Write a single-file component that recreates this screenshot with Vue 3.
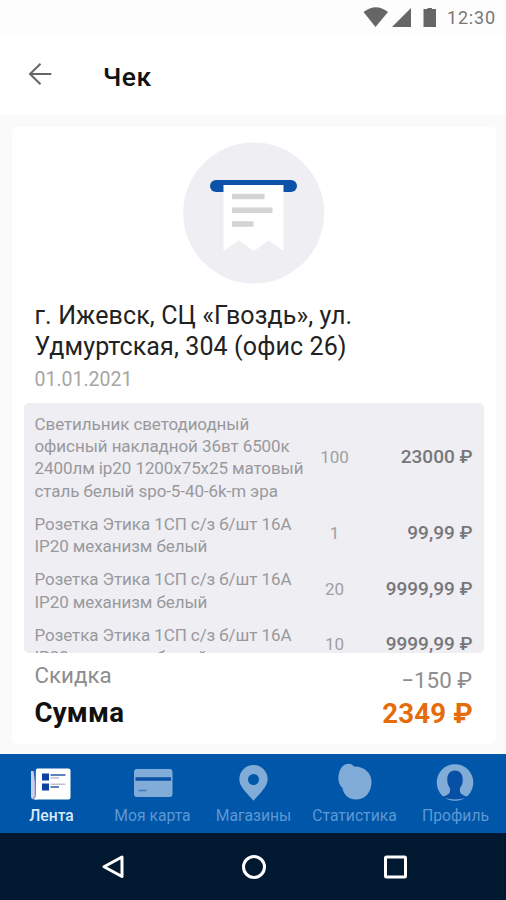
<script setup>
const rows = [
  { name: ['Светильник светодиодный', 'офисный накладной 36вт 6500к', '2400лм ip20 1200x75x25 матовый', 'сталь белый spo-5-40-6k-m эра'], qty: '100', price: '23000 ₽' },
  { name: ['Розетка Этика 1СП с/з б/шт 16А', 'IP20 механизм белый'], qty: '1', price: '99,99 ₽' },
  { name: ['Розетка Этика 1СП с/з б/шт 16А', 'IP20 механизм белый'], qty: '20', price: '9999,99 ₽' },
  { name: ['Розетка Этика 1СП с/з б/шт 16А', 'IP20 механизм белый'], qty: '10', price: '9999,99 ₽' },
]
</script>

<template>
  <div class="screen">
    <div class="status">
      <svg class="signals" width="78" height="24" viewBox="0 0 78 24" fill="#666">
        <path d="M1.500 8Q14 -1.500 26 8L13.500 23Z" />
        <path d="M49 4V23H30Z" />
        <path d="M65.500 5V4H70V5H74V23H61.500V5Z" />
      </svg>
      <span class="time">12:30</span>
    </div>
    <header class="head">
      <svg class="back" width="24" height="24" viewBox="0 0 24 24" fill="none" stroke="#666" stroke-width="2">
        <path d="M23.300 12H2M12.500 1.700L2 12L12.500 22.300" />
      </svg>
      <h1>Чек</h1>
    </header>
    <main class="body">
      <section class="card">
        <svg class="hero" width="142" height="142" viewBox="0 0 142 142">
          <circle cx="70.700" cy="71" r="70.500" fill="#eeeef3" />
          <rect x="27" y="38" width="87" height="12" rx="6" fill="#0c52a8" />
          <path d="M40.500 43H100.500V109L85.500 98.500L71 109L56 98.500L40.500 109Z" fill="#fff" />
          <path d="M49 54.500H81.500M49 68.300H89.500M49 82H70.500" stroke="#d4d4d4" stroke-width="5.500" />
        </svg>
        <h2>г. Ижевск, СЦ «Гвоздь», ул.<br />Удмуртская, 304 (офис 26)</h2>
        <p class="date">01.01.2021</p>
        <div class="list">
          <div v-for="(r, i) in rows" :key="i" class="row">
            <div class="name"><div v-for="l in r.name" :key="l">{{ l }}</div></div>
            <div class="qty">{{ r.qty }}</div>
            <div class="price">{{ r.price }}</div>
          </div>
        </div>
        <div class="discount"><span>Скидка</span><span class="minus">−150 ₽</span></div>
        <div class="total"><span>Сумма</span><span class="sum">2349 ₽</span></div>
      </section>
    </main>
    <nav class="tabs">
      <div class="tab active">
        <svg width="42" height="38" viewBox="1.5 0 42 38">
          <path d="M4 6.500H1.500V32Q1.500 35 5 35H8Z" fill="#c9cfea" transform="translate(0 -1.500)" />
          <path d="M6.500 4Q6.500 2.500 8 2.500H39Q41 2.500 41 4.500V31.500Q41 33.500 39 33.500H6Q3 33.500 6 30.500Z" fill="#fff" />
          <path d="M5.800 4.500V29.500Q5.800 32.500 3.500 32.500" fill="none" stroke="#5d73bd" />
          <path d="M12.500 7.500H19.500V14.500H12.500ZM12.500 17.500H19.500V24.500H12.500Z" fill="#0c43a1" />
          <path d="M21 9H36M21 21H29.500" stroke="#3159a8" stroke-width="1.700" />
          <path d="M21 12H29.500M21 18.300H36" stroke="#c3bfd1" stroke-width="1.500" />
        </svg>
        <span>Лента</span>
      </div>
      <div class="tab">
        <svg width="42" height="38" viewBox="0 0 42 38">
          <rect x="2" y="3" width="38.500" height="28" rx="3" fill="#80acd7" />
          <path d="M3.500 13H39" stroke="#0a51a6" stroke-width="3.600" />
          <path d="M6.500 24.500H14.500" stroke="#3979b9" stroke-width="1.500" />
        </svg>
        <span>Моя карта</span>
      </div>
      <div class="tab">
        <svg width="42" height="38" viewBox="0 0 42 38">
          <path fill="#80acd7" fill-rule="evenodd" d="M20.500-1A14.200 14.200 0 0 0 6.300 13.200C6.300 21 15 28 20.500 34.700C26 28 34.700 21 34.700 13.200A14.200 14.200 0 0 0 20.500-1ZM20.500 8A5.500 5.500 0 1 1 20.500 19A5.500 5.500 0 1 1 20.500 8Z" />
        </svg>
        <span>Магазины</span>
      </div>
      <div class="tab">
        <svg width="42" height="38" viewBox="0 0 42 38">
          <path fill="#80acd7" d="M7.500 1.500C10-2.300 17-4 20 .5C30 .2 37.500 7 37.500 15.500C37.500 26.500 31 33.500 22 33.500C15 33.500 9.500 29 8.500 22C3.500 18 3 8 7.500 1.500Z" />
        </svg>
        <span>Статистика</span>
      </div>
      <div class="tab">
        <svg width="42" height="38" viewBox="0 0 42 38">
          <circle cx="20" cy="16.500" r="18.300" fill="#80acd7" />
          <path fill="#0750a5" d="M20 4.500C14.500 4.500 12 9 12.300 14C12.300 18.500 14 20 15 22.500C16 28 12 29.500 7 31C14.500 34.300 25.500 34.300 33 31C28 29.500 24 28 25 22.500C26 20 27.700 18.500 27.700 14C28 9 25.500 4.500 20 4.500Z" />
        </svg>
        <span>Профиль</span>
      </div>
    </nav>
    <div class="system">
      <svg width="26" height="26" viewBox="0 0 26 26"><path d="M23 3V22.500L5 12.800Z" /></svg>
      <svg width="26" height="26" viewBox="0 0 26 26"><circle cx="13" cy="13" r="10.500" /></svg>
      <svg width="26" height="26" viewBox="0 0 26 26"><rect x="3.500" y="3" width="20" height="20" rx="1" /></svg>
    </div>
  </div>
</template>

<style>
body { margin: 0; }
</style>

<style scoped>
.screen { width: 506px; height: 900px; display: flex; flex-direction: column; background: #fafafa; font-family: Roboto, "Noto Sans", sans-serif; color: #111; overflow: hidden; }
.status { height: 36px; box-sizing: border-box; background: #fdfdfd; display: flex; justify-content: flex-end; align-items: flex-start; padding: 4px 10px 0 0; }
.signals { margin: 0 7px 0 0; }
.time { font-size: 18px; line-height: 28px; letter-spacing: 0.850px; color: #777; white-space: nowrap; }
.head { height: 78px; box-sizing: border-box; background: #fff; display: flex; align-items: center; padding: 0 0 2px 28px; }
h1 { margin: 6px 0 0 51px; font-size: 26.500px; line-height: 34px; font-weight: 500; letter-spacing: 0.500px; }
.body { padding: 13px 10px 10px 12px; flex: 1; box-sizing: border-box; }
.card { height: 617px; box-sizing: border-box; background: #fff; border-radius: 5px; padding: 15px 12px 0 11.500px; display: flex; flex-direction: column; }
.hero { align-self: center; flex: none; }
h2 { margin: 16px 0 0 11px; font-size: 25px; line-height: 31px; font-weight: 400; letter-spacing: 0.120px; white-space: nowrap; color: #222; }
.date { margin: 6px 0 0 11px; font-size: 19.500px; line-height: 24px; color: #a6a6a6; }
.list { flex: none; margin-top: 11px; height: 250px; box-sizing: border-box; overflow: hidden; background: #eeeef3; border-radius: 5px; padding: 9.500px 11.500px 0 11px; display: flex; flex-direction: column; gap: 10.600px; }
.row { flex: none; display: grid; grid-template-columns: 275px 50px 1fr; align-items: center; line-height: 22.400px; white-space: nowrap; }
.name { font-size: 17px; letter-spacing: -0.080px; color: #99999d; }
.qty { font-size: 17px; text-align: center; color: #a0a0a4; }
.price { font-size: 19px; font-weight: 500; text-align: right; color: #77777a; }
.row:not(:first-child) .qty, .row:not(:first-child) .price { padding-bottom: 3px; }
.discount { display: flex; justify-content: space-between; margin: 8px 12px 0 11px; height: 30px; line-height: 28px; font-size: 22.300px; color: #8d8d8d; }
.minus { padding-top: 5px; }
.total { display: flex; justify-content: space-between; margin: 5px 11px 0; line-height: 34px; font-size: 27.600px; letter-spacing: 0.200px; font-weight: 700; }
.sum { color: #e46c0a; padding-top: 1px; }
.tabs { height: 79px; flex: none; background: #0056a9; display: flex; padding: 12px 0 0 1px; box-sizing: border-box; }
.tab { flex: 1; min-width: 0; display: flex; flex-direction: column; align-items: center; gap: 2px; font-size: 15.700px; line-height: 20px; color: #5d98d2; white-space: nowrap; }
.tab svg { overflow: visible; flex: none; }
.active { color: #d9e9fa; font-weight: 500; }
.system { height: 67px; flex: none; background: #001930; display: flex; justify-content: center; gap: 115.500px; align-items: center; padding-left: 1px; box-sizing: border-box; }
.system svg { fill: none; stroke: #fff; stroke-width: 3; stroke-linejoin: round; }
</style>
